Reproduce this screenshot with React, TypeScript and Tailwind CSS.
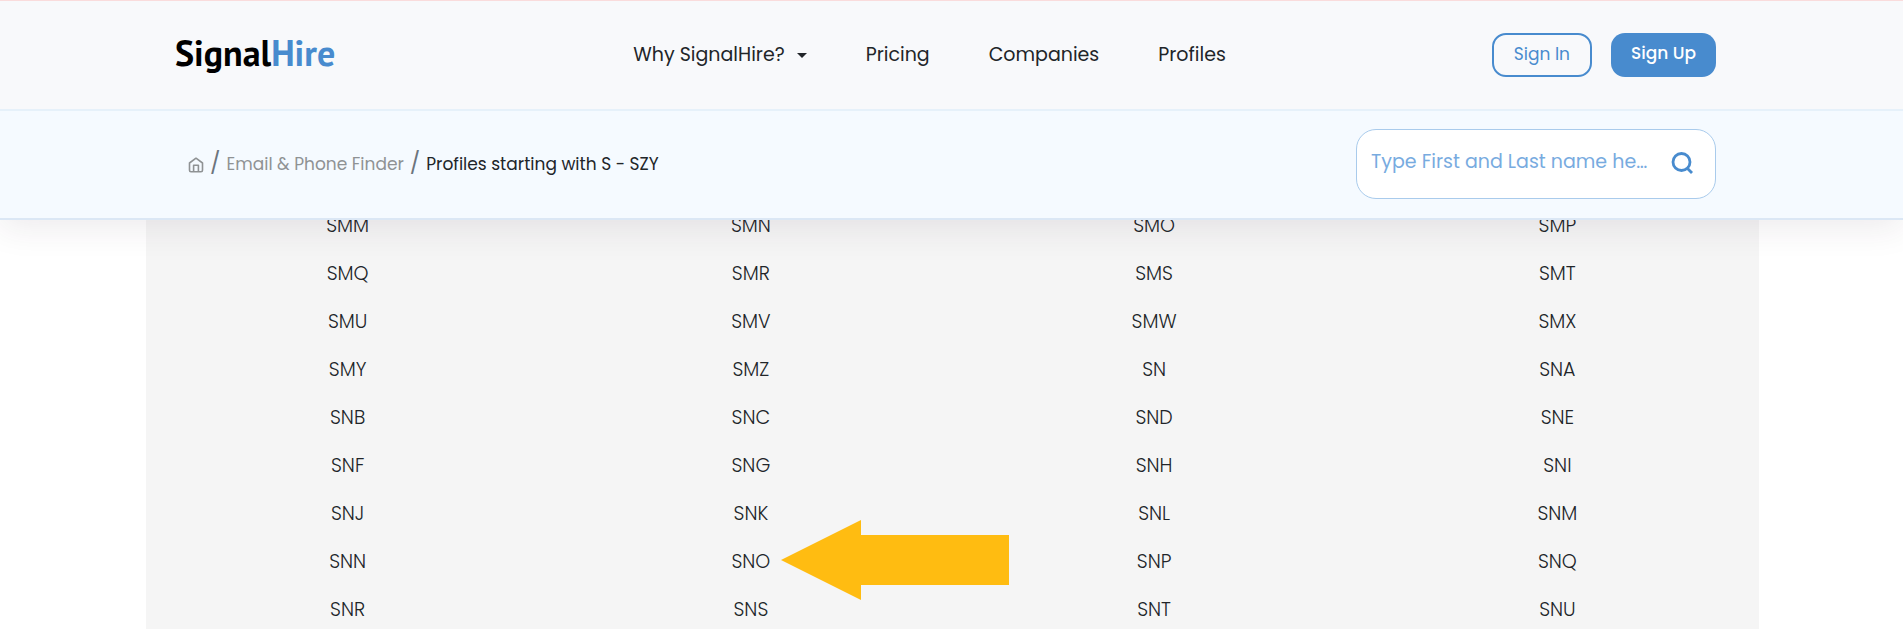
import type { ReactNode } from "react";

const navLinks = ["Pricing", "Companies", "Profiles"];

const prefixes = [
  "SMM", "SMN", "SMO", "SMP",
  "SMQ", "SMR", "SMS", "SMT",
  "SMU", "SMV", "SMW", "SMX",
  "SMY", "SMZ", "SN", "SNA",
  "SNB", "SNC", "SND", "SNE",
  "SNF", "SNG", "SNH", "SNI",
  "SNJ", "SNK", "SNL", "SNM",
  "SNN", "SNO", "SNP", "SNQ",
  "SNR", "SNS", "SNT", "SNU",
];

const highlighted = "SNO";

function Container({ children }: { children: ReactNode }) {
  return (
    <div className="mx-auto flex w-full max-w-[1613px] items-center justify-between pr-[42px] pl-[30px]">
      {children}
    </div>
  );
}

function HomeIcon() {
  return (
    <svg viewBox="0 0 16 16" className="h-4 w-4" fill="none" stroke="currentColor" strokeWidth="1.6" strokeLinejoin="round">
      <path d="M1.5 6 8 1.2 14.5 6v7.300a1.500 1.500 0 0 1-1.500 1.500H3a1.500 1.500 0 0 1-1.500-1.500z" />
      <path d="M5.600 14.800V8.200h4.800v6.600" />
    </svg>
  );
}

function SearchIcon() {
  return (
    <svg viewBox="0 0 22 22" className="h-[22px] w-[22px]" fill="none" stroke="currentColor" strokeWidth="2.8">
      <circle cx="10.500" cy="10" r="8.500" />
      <path d="m16 16 5 5" />
    </svg>
  );
}

function PointerArrow() {
  return (
    <svg
      viewBox="0 0 228 80"
      className="pointer-events-none absolute top-1/2 left-1/2 -mt-0.5 ml-[30px] h-20 w-[228px] -translate-y-1/2"
      fill="#ffbc11"
      aria-hidden="true"
    >
      <path d="M0 40 80 0v15h148v50H80v15z" />
    </svg>
  );
}

export default function App() {
  return (
    <div className="h-screen overflow-hidden bg-white font-['Poppins','Inter',sans-serif] text-[#212529]">
      <header className="relative z-10 border-b-2 border-[#dbe7f5] shadow-[0_8px_32px_rgba(60,30,50,0.09)]">
        <div className="flex h-[111px] border-t border-b-2 border-t-[#fadcdc] border-b-[#e6f1fa] bg-[#f8f9fb]">
          <Container>
            <a href="#" className="pb-1 font-['PT_Sans','Lato',sans-serif] text-4xl font-bold text-black">
              Signal<span className="text-[#488bce]">Hire</span>
            </a>
            <nav className="flex items-center gap-[59px] pl-8 text-[19px]">
              <button type="button" className="flex items-center gap-3">
                Why SignalHire?
                <span className="border-x-5 border-t-5 border-x-transparent border-t-[#212529]" />
              </button>
              {navLinks.map((link) => (
                <a key={link} href="#">{link}</a>
              ))}
            </nav>
            <div className="flex gap-[19px]">
              <button type="button" className="h-11 rounded-[14px] border-2 border-[#488bce] px-5 text-[17px] text-[#488bce]">
                Sign In
              </button>
              <button type="button" className="h-11 rounded-[14px] bg-[#488bce] px-5 pb-0.5 text-[17px] font-medium text-white">
                Sign Up
              </button>
            </div>
          </Container>
        </div>

        <div className="flex h-[107px] bg-[#f5faff] pb-0.5">
          <Container>
            <nav aria-label="Breadcrumb" className="flex items-center pt-0.5 pl-[13px] text-[17px] text-[#8f9294]">
              <a href="#" aria-label="Home"><HomeIcon /></a>
              <span className="mx-1.5 pb-1 text-[22px] text-[#6c757d]">/</span>
              <a href="#">Email &amp; Phone Finder</a>
              <span className="mx-1.5 pb-1 text-[22px] text-[#6c757d]">/</span>
              <span className="text-[#212529]">Profiles starting with S - SZY</span>
            </nav>
            <form className="flex h-[70px] w-[360px] items-center rounded-[20px] border border-[#a9cbec] bg-white pr-[22px] pb-0.5 pl-3.5">
              <input
                type="text"
                aria-label="First and last name"
                placeholder="Type First and Last name here"
                className="min-w-0 flex-1 text-[19px] text-ellipsis outline-none placeholder:text-[#78abdf]"
              />
              <button type="button" aria-label="Search" className="ml-5 text-[#488bce]">
                <SearchIcon />
              </button>
            </form>
          </Container>
        </div>
      </header>

      <main className="-mt-[18px] pl-0.5">
        <ul className="mx-auto grid w-full max-w-[1613px] grid-cols-4 bg-[#f5f5f5] text-center text-[19px] leading-[48px] font-light">
          {prefixes.map((prefix) => (
            <li key={prefix} className="relative">
              <a href="#">{prefix}</a>
              {prefix === highlighted && <PointerArrow />}
            </li>
          ))}
        </ul>
      </main>
    </div>
  );
}
